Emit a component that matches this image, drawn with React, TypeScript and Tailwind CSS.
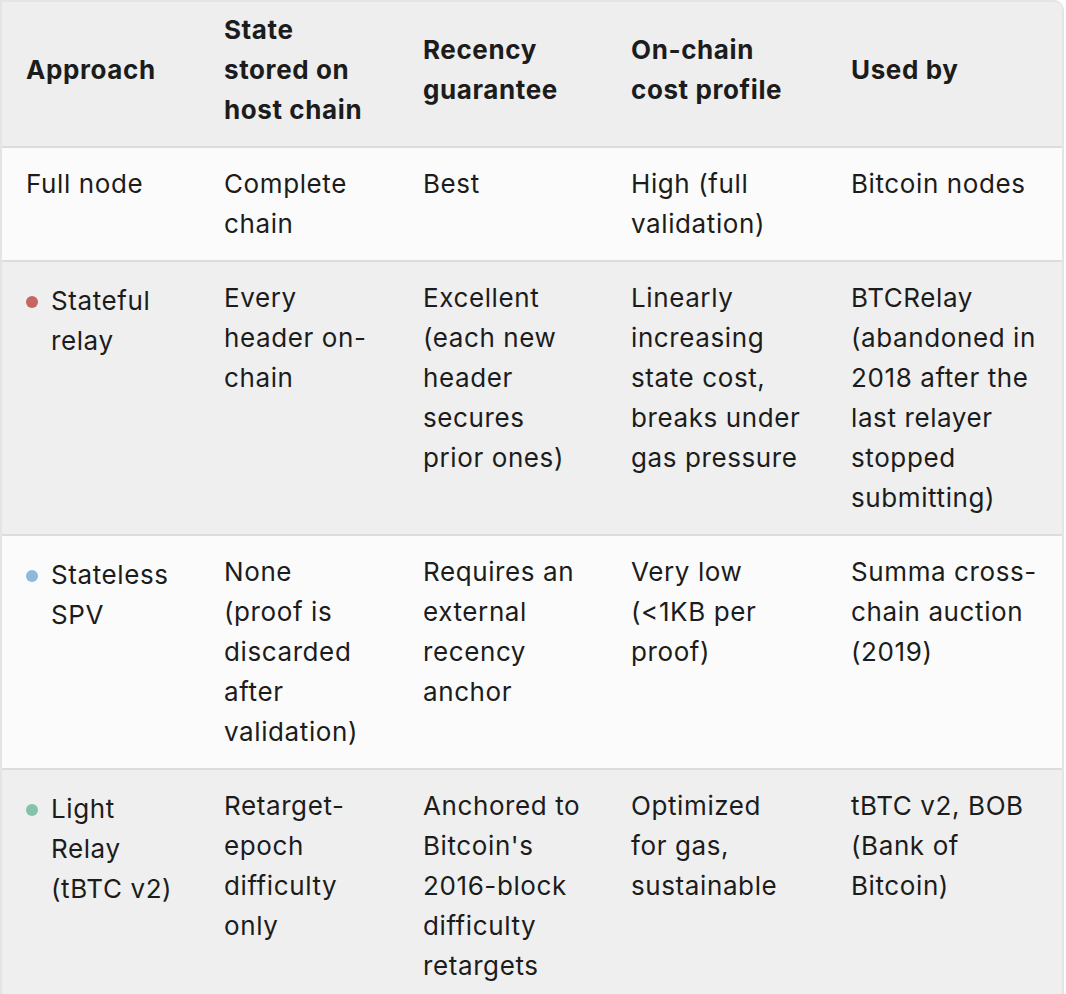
import React from "react";

type Row = {
  approach: string;
  dot?: string;
  state: string;
  recency: string;
  cost: string;
  usedBy: string;
  shade: boolean;
};

const rows: Row[] = [
  {
    approach: "Full node",
    state: "Complete chain",
    recency: "Best",
    cost: "High (full validation)",
    usedBy: "Bitcoin nodes",
    shade: false,
  },
  {
    approach: "Stateful relay",
    dot: "bg-[#c46662]",
    state: "Every header on-chain",
    recency: "Excellent (each new header secures prior ones)",
    cost: "Linearly increasing state cost, breaks under gas pressure",
    usedBy: "BTCRelay (abandoned in 2018 after the last relayer stopped submitting)",
    shade: true,
  },
  {
    approach: "Stateless SPV",
    dot: "bg-[#8db9dc]",
    state: "None (proof is discarded after validation)",
    recency: "Requires an external recency anchor",
    cost: "Very low (<1KB per proof)",
    usedBy: "Summa cross-chain auction (2019)",
    shade: false,
  },
  {
    approach: "Light Relay (tBTC v2)",
    dot: "bg-[#82c3a9]",
    state: "Retarget-epoch difficulty only",
    recency: "Anchored to Bitcoin's 2016-block difficulty retargets",
    cost: "Optimized for gas, sustainable",
    usedBy: "tBTC v2, BOB (Bank of Bitcoin)",
    shade: true,
  },
];

const headers = ["Approach", "State stored on host chain", "Recency guarantee", "On-chain cost profile", "Used by"];

export default function App() {
  return (
    <div className="min-h-screen bg-white font-['Inter','Noto_Sans',sans-serif] text-[26px] leading-[40px] tracking-[0.6px] text-[#1c1c1c]">
      <div className="w-[1064px] overflow-hidden rounded-tr-[10px] border-x-2 border-t-2 border-[#e4e4e4]">
        <table className="w-full table-fixed border-collapse">
          <colgroup>
            <col className="w-[198px]" />
            <col className="w-[199px]" />
            <col className="w-[208px]" />
            <col className="w-[220px]" />
            <col />
          </colgroup>
          <thead>
            <tr className="border-b-2 border-[#dcdcdc] bg-[#eeeeee]">
              {headers.map((h) => (
                <th key={h} className="px-6 pb-4 pt-[8px] text-left align-middle font-bold">
                  {h}
                </th>
              ))}
            </tr>
          </thead>
          <tbody>
            {rows.map((r) => (
              <tr
                key={r.approach}
                className={r.shade ? "border-b-2 border-[#dcdcdc] bg-[#efefef]" : "border-b-2 border-[#dcdcdc] bg-[#fbfbfb]"}
              >
                <td className="px-6 py-4 align-top">
                  {r.dot ? (
                    <div className="mt-[3px] flex items-start gap-[13px]">
                      <span className={`mt-[15px] h-[12px] w-[12px] shrink-0 rounded-full ${r.dot}`} />
                      <span>{r.approach}</span>
                    </div>
                  ) : (
                    r.approach
                  )}
                </td>
                <td className="px-6 py-4 align-top">{r.state}</td>
                <td className="px-6 py-4 align-top">{r.recency}</td>
                <td className="px-6 py-4 align-top">{r.cost}</td>
                <td className="px-6 py-4 align-top">{r.usedBy}</td>
              </tr>
            ))}
          </tbody>
        </table>
      </div>
    </div>
  );
}
